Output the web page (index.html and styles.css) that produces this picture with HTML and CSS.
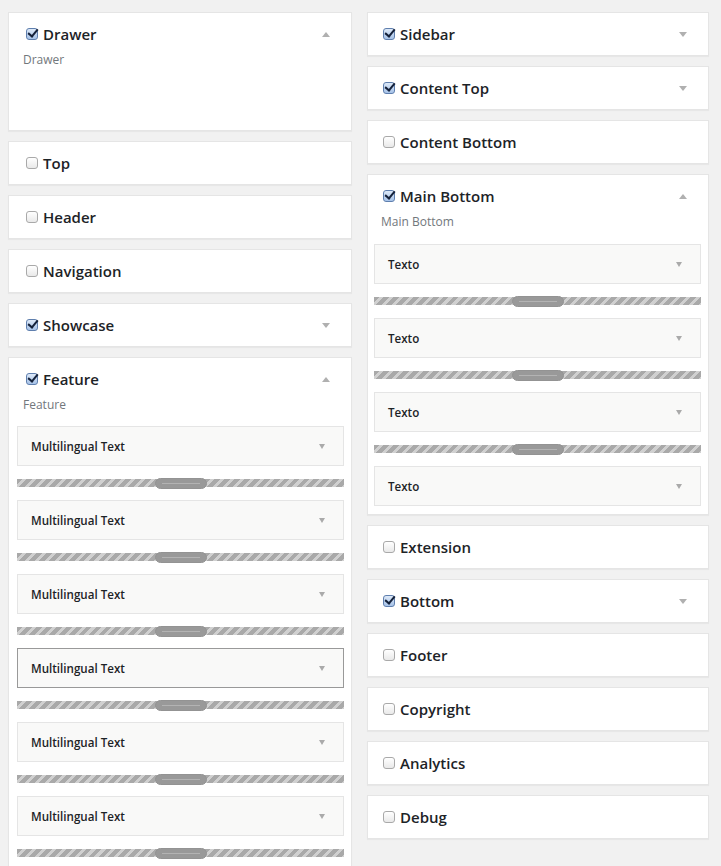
FILE: index.html
```html
<!DOCTYPE html>
<html>
<head>
<meta charset="utf-8">
<link rel="stylesheet" href="styles.css">
</head>
<body>
<div class="board">
  <div class="col col-left">
    <div class="area open">
      <div class="area-head"><span class="cb on"></span><span class="area-title">Drawer</span><span class="arrow up"></span></div>
      <div class="area-body">
        <div class="desc">Drawer</div>
        <div class="list empty"></div>
      </div>
    </div>
    <div class="area"><div class="area-head"><span class="cb"></span><span class="area-title">Top</span></div></div>
    <div class="area"><div class="area-head"><span class="cb"></span><span class="area-title">Header</span></div></div>
    <div class="area"><div class="area-head"><span class="cb"></span><span class="area-title">Navigation</span></div></div>
    <div class="area"><div class="area-head"><span class="cb on"></span><span class="area-title">Showcase</span><span class="arrow down"></span></div></div>
    <div class="area open">
      <div class="area-head"><span class="cb on"></span><span class="area-title">Feature</span><span class="arrow up"></span></div>
      <div class="area-body">
        <div class="desc">Feature</div>
        <div class="list">
          <div class="widget"><span class="w-title">Multilingual Text</span><span class="w-arrow"></span></div>
          <div class="sep"><span class="grip"></span></div>
          <div class="widget"><span class="w-title">Multilingual Text</span><span class="w-arrow"></span></div>
          <div class="sep"><span class="grip"></span></div>
          <div class="widget"><span class="w-title">Multilingual Text</span><span class="w-arrow"></span></div>
          <div class="sep"><span class="grip"></span></div>
          <div class="widget hover"><span class="w-title">Multilingual Text</span><span class="w-arrow"></span></div>
          <div class="sep"><span class="grip"></span></div>
          <div class="widget"><span class="w-title">Multilingual Text</span><span class="w-arrow"></span></div>
          <div class="sep"><span class="grip"></span></div>
          <div class="widget"><span class="w-title">Multilingual Text</span><span class="w-arrow"></span></div>
          <div class="sep"><span class="grip"></span></div>
        </div>
      </div>
    </div>
  </div>
  <div class="col col-right">
    <div class="area"><div class="area-head"><span class="cb on"></span><span class="area-title">Sidebar</span><span class="arrow down"></span></div></div>
    <div class="area"><div class="area-head"><span class="cb on"></span><span class="area-title">Content Top</span><span class="arrow down"></span></div></div>
    <div class="area"><div class="area-head"><span class="cb"></span><span class="area-title">Content Bottom</span></div></div>
    <div class="area open">
      <div class="area-head"><span class="cb on"></span><span class="area-title">Main Bottom</span><span class="arrow up"></span></div>
      <div class="area-body">
        <div class="desc">Main Bottom</div>
        <div class="list">
          <div class="widget"><span class="w-title">Texto</span><span class="w-arrow"></span></div>
          <div class="sep"><span class="grip"></span></div>
          <div class="widget"><span class="w-title">Texto</span><span class="w-arrow"></span></div>
          <div class="sep"><span class="grip"></span></div>
          <div class="widget"><span class="w-title">Texto</span><span class="w-arrow"></span></div>
          <div class="sep"><span class="grip"></span></div>
          <div class="widget"><span class="w-title">Texto</span><span class="w-arrow"></span></div>
        </div>
      </div>
    </div>
    <div class="area"><div class="area-head"><span class="cb"></span><span class="area-title">Extension</span></div></div>
    <div class="area"><div class="area-head"><span class="cb on"></span><span class="area-title">Bottom</span><span class="arrow down"></span></div></div>
    <div class="area"><div class="area-head"><span class="cb"></span><span class="area-title">Footer</span></div></div>
    <div class="area"><div class="area-head"><span class="cb"></span><span class="area-title">Copyright</span></div></div>
    <div class="area"><div class="area-head"><span class="cb"></span><span class="area-title">Analytics</span></div></div>
    <div class="area"><div class="area-head"><span class="cb"></span><span class="area-title">Debug</span></div></div>
  </div>
</div>
</body>
</html>
```
FILE: styles.css
```css
html, body {
  margin: 0;
  padding: 0;
  background: #f1f1f1;
  font-family: "Open Sans", "Noto Sans", "Liberation Sans", sans-serif;
  color: #23282d;
}
body {
  height: 866px;
  overflow: hidden;
}
.board {
  display: grid;
  grid-template-columns: 344px 342px;
  column-gap: 15px;
  padding: 12px 12px 0 8px;
  align-items: start;
}
.col {
  display: flex;
  flex-direction: column;
  gap: 10px;
}
.area {
  background: #fff;
  border: 1px solid #e5e5e5;
  box-shadow: 0 1px 1px rgba(0, 0, 0, 0.04);
}
.area-head {
  display: flex;
  align-items: center;
  height: 20px;
  padding: 11px 21px 11px 17px;
}
.area.open .area-head {
  padding-bottom: 2px;
}
.col-right .area-head {
  padding-left: 15px;
}
.area-title {
  font-size: 15px;
  font-weight: 600;
  line-height: 20px;
  margin-left: 5px;
  flex: 1;
  color: #1d2327;
}
.cb {
  width: 12px;
  height: 12px;
  box-sizing: border-box;
  border: 1px solid #a9a9a9;
  border-radius: 3px;
  background: linear-gradient(#ffffff, #e9e9e9);
  position: relative;
  flex: none;
  margin-top: -1px;
}
.cb.on {
  border-color: #5f7fae;
  background: linear-gradient(#dde9f8, #a6c2e8);
}
.cb.on::after {
  content: "";
  position: absolute;
  left: 3px;
  top: -2px;
  width: 4px;
  height: 8px;
  border-right: 2.5px solid #14213a;
  border-bottom: 2.5px solid #14213a;
  transform: rotate(40deg);
}
.arrow {
  width: 0;
  height: 0;
  border-left: 4px solid transparent;
  border-right: 4px solid transparent;
  flex: none;
}
.arrow.up {
  border-bottom: 5px solid #b0b0b0;
}
.arrow.down {
  border-top: 5px solid #b0b0b0;
}
.area-body {
  padding: 0 7px 8px 8px;
}
.col-right .area-body {
  padding-left: 6px;
}
.desc {
  font-size: 12px;
  line-height: 18px;
  color: #72777c;
  padding: 5px 6px 0;
}
.col-right .desc {
  padding-left: 7px;
}
.list {
  margin-top: 13px;
  display: flex;
  flex-direction: column;
}
.col-left .list {
  margin-top: 12px;
}
.list.empty {
  min-height: 41px;
}
.widget {
  height: 38px;
  background: #f9f9f8;
  border: 1px solid #e5e5e5;
  display: flex;
  align-items: center;
  padding: 0 18px 0 13px;
}
.widget.hover {
  border-color: #999;
}
.w-title {
  flex: 1;
  font-size: 11.6px;
  font-weight: 600;
  color: #1d2327;
}
.w-arrow {
  width: 0;
  height: 0;
  border-left: 3.5px solid transparent;
  border-right: 3.5px solid transparent;
  border-top: 5px solid #aaa;
}
.sep {
  height: 8px;
  margin: 13px 0;
  background: repeating-linear-gradient(135deg, #a9a9a9 0 4px, #d0d0d0 4px 7px);
  display: flex;
  justify-content: center;
  align-items: center;
}
.grip {
  width: 52px;
  height: 11px;
  box-sizing: border-box;
  border-radius: 6px;
  background: #999;
  border: 1px solid #939393;
  position: relative;
}
.grip::after {
  content: "";
  position: absolute;
  left: 6px;
  right: 6px;
  top: 4px;
  height: 1px;
  background: #b3b3b3;
}
```
